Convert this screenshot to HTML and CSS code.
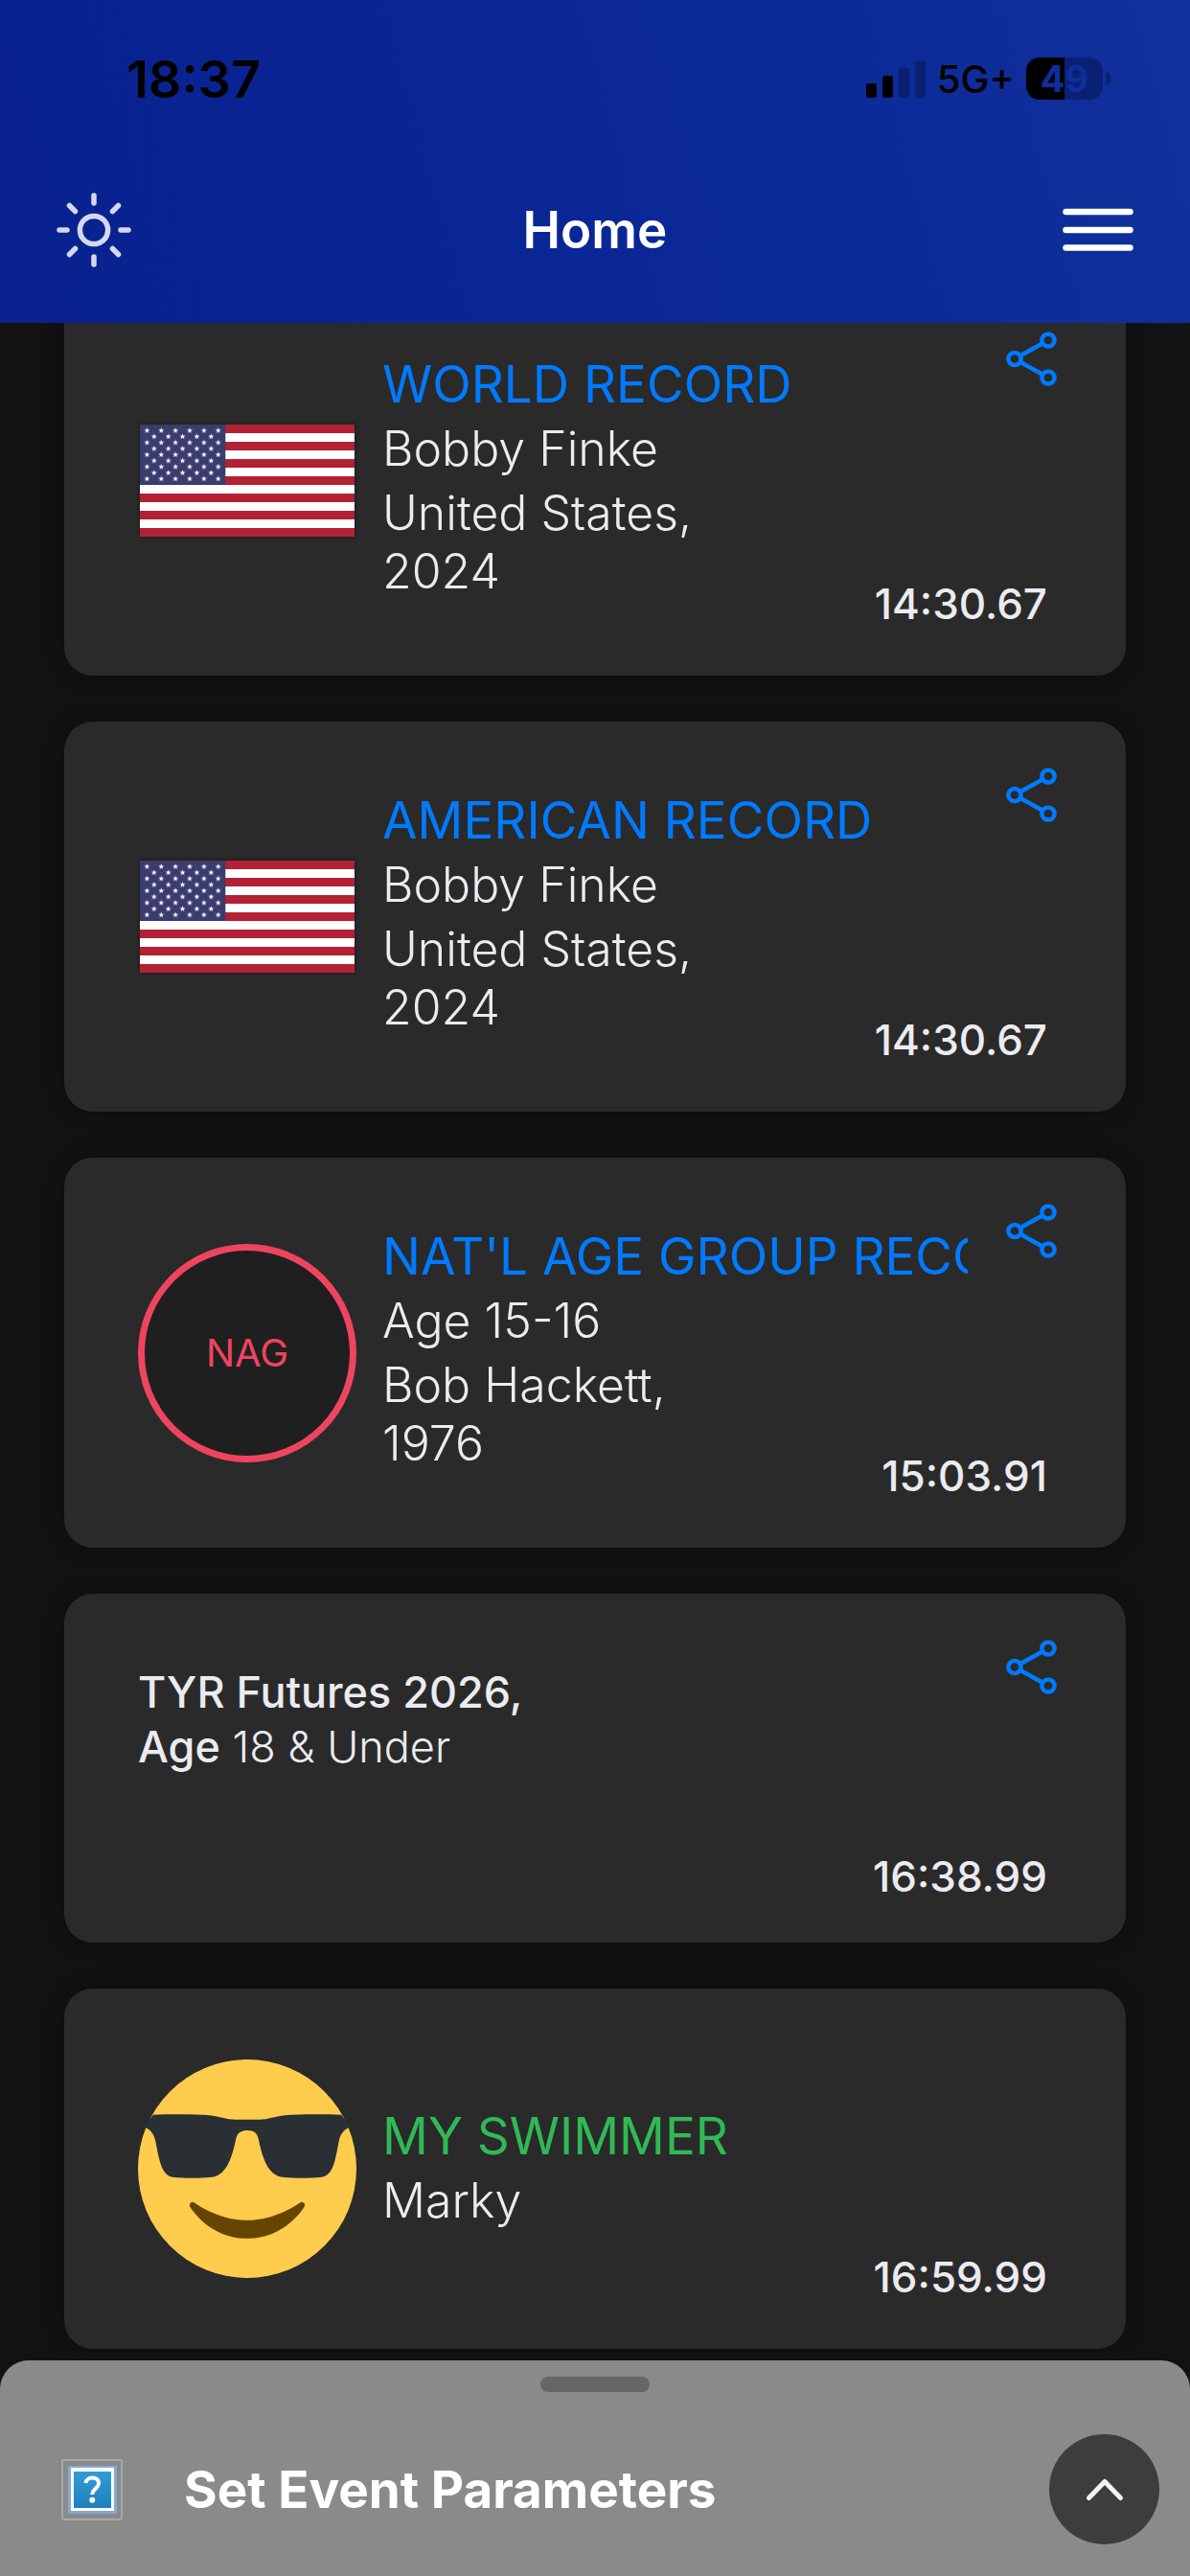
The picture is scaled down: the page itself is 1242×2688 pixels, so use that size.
FILE: index.html
```html
<!DOCTYPE html>
<html lang="en">
<head>
  <meta charset="UTF-8" />
  <meta name="viewport" content="width=device-width, initial-scale=1" />
  <title>Home</title>
  <link rel="stylesheet" href="styles.css">
</head>
<body>
  <!-- shared icons -->
  <svg class="defs" width="0" height="0" aria-hidden="true">
    <defs>
      <path id="star" d="M0-3.2 .8-1H3L1.2.4 1.9 2.7 0 1.3-1.9 2.7-1.2.4-3-1H-.8Z" fill="#fff" />
      <pattern id="stars" width="14.87" height="12.6" patternUnits="userSpaceOnUse">
        <use href="#star" x="7.4" y="6.3" />
      </pattern>
      <pattern id="stars-inner" x="7.43" y="6.3" width="14.87" height="12.6" patternUnits="userSpaceOnUse">
        <use href="#star" x="7.4" y="6.3" />
      </pattern>
    </defs>
    <symbol id="flag-us" viewBox="0 0 224 117">
      <rect width="224" height="117" fill="#fff" />
      <path d="M0 4.5H224M0 22.5H224M0 40.5H224M0 58.5H224M0 76.5H224M0 94.5H224M0 112.5H224" stroke="#b22234" stroke-width="9" />
      <rect width="89.3" height="63" fill="#3c3b6e" />
      <rect width="89.3" height="63" fill="url(#stars)" />
      <rect x="7.43" y="6.3" width="74.4" height="50.4" fill="url(#stars-inner)" />
    </symbol>
    <symbol id="share" viewBox="0 0 53 57">
      <g fill="none" stroke="#007aff" stroke-width="4.5">
        <circle cx="44" cy="9" r="6.6" />
        <circle cx="9" cy="28.5" r="6.6" />
        <circle cx="44" cy="48" r="6.6" />
        <path d="M14.8 25.3 38.2 12.2M14.8 31.7 38.2 44.8" />
      </g>
    </symbol>
  </svg>

  <header class="header">
    <div class="status">
      <span class="clock">18:37</span>
      <div class="status-icons">
        <svg width="62" height="40" viewBox="0 0 62 40" aria-hidden="true">
          <rect x="0" y="25" width="11" height="15" rx="3" />
          <rect x="17" y="17" width="11" height="23" rx="3" />
          <rect x="34" y="9" width="11" height="31" rx="3" opacity=".25" />
          <rect x="51" y="1" width="11" height="39" rx="3" opacity=".25" />
        </svg>
        <span class="network">5G+</span>
        <span class="battery">49</span>
      </div>
    </div>
    <nav class="navbar">
      <button class="icon-btn" aria-label="Toggle theme">
        <svg width="80" height="80" viewBox="0 0 80 80" fill="none" stroke="#d3d8ee" stroke-width="5.5" stroke-linecap="round">
          <circle cx="40" cy="40" r="14.6" />
          <path d="M40 4V12M40 68V76M4 40H12M68 40H76M14.5 14.5 20.5 20.5M59.5 59.5 65.5 65.5M14.5 65.5 20.5 59.5M59.5 20.5 65.5 14.5" />
        </svg>
      </button>
      <h1>Home</h1>
      <button class="icon-btn" aria-label="Menu">
        <svg width="76" height="48" viewBox="0 0 76 48" stroke="#fff" stroke-width="6.5" stroke-linecap="round">
          <path d="M4.5 5H71.5M4.5 24H71.5M4.5 42.5H71.5" />
        </svg>
      </button>
    </nav>
  </header>

  <main class="cards">
    <article class="card">
      <svg class="flag" viewBox="0 0 224 117" role="img" aria-label="United States flag"><use href="#flag-us" /></svg>
      <div class="info">
        <h2>WORLD RECORD</h2>
        <p>Bobby Finke</p>
        <p class="detail">United States,<br>2024</p>
      </div>
      <div class="side">
        <button class="icon-btn" aria-label="Share"><svg width="53" height="57"><use href="#share" /></svg></button>
        <span class="time">14:30.67</span>
      </div>
    </article>

    <article class="card">
      <svg class="flag" viewBox="0 0 224 117" role="img" aria-label="United States flag"><use href="#flag-us" /></svg>
      <div class="info">
        <h2>AMERICAN RECORD</h2>
        <p>Bobby Finke</p>
        <p class="detail">United States,<br>2024</p>
      </div>
      <div class="side">
        <button class="icon-btn" aria-label="Share"><svg width="53" height="57"><use href="#share" /></svg></button>
        <span class="time">14:30.67</span>
      </div>
    </article>

    <article class="card">
      <div class="nag">NAG</div>
      <div class="info">
        <h2>NAT'L AGE GROUP RECORD</h2>
        <p>Age 15-16</p>
        <p class="detail">Bob Hackett,<br>1976</p>
      </div>
      <div class="side">
        <button class="icon-btn" aria-label="Share"><svg width="53" height="57"><use href="#share" /></svg></button>
        <span class="time">15:03.91</span>
      </div>
    </article>

    <article class="card card-standard">
      <p class="standard"><strong>TYR Futures 2026,</strong><br><strong>Age</strong> 18 &amp; Under</p>
      <div class="side">
        <button class="icon-btn" aria-label="Share"><svg width="53" height="57"><use href="#share" /></svg></button>
        <span class="time">16:38.99</span>
      </div>
    </article>

    <article class="card">
      <svg class="avatar" viewBox="0 0 36 36" role="img" aria-label="Smiling face with sunglasses">
        <circle cx="18" cy="18" r="18" fill="#ffcc4d" />
        <path fill="#292f33" d="M2.5 9.1C5 9 9 9 11.3 9.15C13.5 9.3 14.5 9.9 16 9.9H20C21.5 9.9 22.5 9.3 24.7 9.15C27 9 31 9 33.5 9.1L35 11.1C33.9 11.6 33.4 12.2 33.1 13.5C32.6 16 32.3 19.1 30.3 19.4C28.3 19.6 25.8 19.6 23.8 19.4C21.3 19 20.5 16 19.9 13.3C19.7 12.2 19.2 11.7 18 11.7S16.3 12.2 16.1 13.3C15.5 16 14.7 19 12.2 19.4C10.2 19.6 7.7 19.6 5.7 19.4C3.8 19.1 3.4 16 2.9 13.5C2.6 12.2 2.1 11.6 1 11.1Z" />
        <path fill="#664500" d="M27.335 23.629c-.178-.161-.444-.171-.635-.029-.039.029-3.922 2.9-8.7 2.9-4.766 0-8.662-2.871-8.7-2.9-.191-.142-.457-.13-.635.029-.177.16-.217.424-.094.628C8.7 24.472 11.788 29.5 18 29.5s9.301-5.028 9.429-5.243c.123-.205.084-.468-.094-.628z" />
      </svg>
      <div class="info">
        <h2 class="green">MY SWIMMER</h2>
        <p>Marky</p>
      </div>
      <div class="side">
        <span class="time">16:59.99</span>
      </div>
    </article>
  </main>

  <section class="sheet">
    <div class="handle"></div>
    <div class="sheet-row">
      <svg width="64" height="64" viewBox="0 0 64 64" aria-hidden="true">
        <defs>
          <linearGradient id="blue" x1="0" y1="0" x2="0" y2="1">
            <stop offset="0" stop-color="#309dd6" />
            <stop offset="1" stop-color="#1f7fbd" />
          </linearGradient>
        </defs>
        <rect x="1" y="1" width="62" height="62" rx="1" fill="none" stroke="#a8a8a8" stroke-width="2" />
        <rect x="7" y="7" width="51" height="50" fill="#86a9d6" />
        <rect x="10" y="9" width="45" height="45" fill="#fff" />
        <rect x="13" y="13" width="39" height="38" fill="url(#blue)" />
        <path d="M25.5 25C26 17.5 39.5 17.5 39 25.5C38.7 31 32.5 30.5 32.3 37" fill="none" stroke="#fff" stroke-width="4" />
        <circle cx="32.3" cy="42.8" r="3" fill="#fff" />
      </svg>
      <h2>Set Event Parameters</h2>
      <button class="expand" aria-label="Expand">
        <svg width="42" height="26" viewBox="0 0 42 26" fill="none" stroke="#f2f2f7" stroke-width="5" stroke-linecap="round" stroke-linejoin="round">
          <path d="M4.5 21.5 21 4.5 37.5 21.5" />
        </svg>
      </button>
    </div>
  </section>
</body>
</html>
```
FILE: styles.css
```css
* {
  box-sizing: border-box;
}
body {
  margin: 0;
  min-height: 100vh;
  display: flex;
  flex-direction: column;
  background: #121212;
  color: #ebebf0;
  font-family: Inter, sans-serif;
}
h1, h2, p {
  margin: 0;
}
button {
  font: inherit;
  border: none;
  cursor: pointer;
}
svg {
  display: block;
}
.defs {
  position: absolute;
}
.icon-btn {
  padding: 0;
  background: none;
}

/* header */
.header {
  position: relative;
  z-index: 1;
  height: 337px;
  background: linear-gradient(75deg, #08218f, #0a2795 50%, #10309c);
}
.status {
  display: flex;
  justify-content: space-between;
  align-items: center;
  height: 164px;
  padding: 0 91px 0 132px;
  color: #000;
}
.clock {
  font-size: 54px;
  font-weight: 600;
}
.status-icons {
  display: flex;
  align-items: center;
  gap: 12px;
}
.network {
  font-size: 40px;
  font-weight: 500;
}
.battery {
  position: relative;
  width: 80px;
  height: 44px;
  border-radius: 14px;
  background: linear-gradient(90deg, #000 50%, #0a2173 50%);
  color: #0e2e9b;
  font-size: 38px;
  font-weight: 700;
  line-height: 44px;
  text-align: center;
}
.battery::after {
  content: "";
  position: absolute;
  left: 83px;
  top: 15px;
  width: 5px;
  height: 14px;
  border-radius: 0 5px 5px 0;
  background: #0a2173;
}
.navbar {
  display: grid;
  grid-template-columns: 80px 1fr 80px;
  align-items: center;
  height: 152px;
  padding: 0 58px;
}
.navbar h1 {
  color: #fff;
  font-size: 53px;
  font-weight: 600;
  text-align: center;
}
.navbar .icon-btn:last-child {
  justify-self: end;
}

/* cards */
.cards {
  flex: 1;
  display: flex;
  flex-direction: column;
  gap: 48px;
  margin-top: -39px;
  padding: 0 67px 12px;
}
.card {
  display: grid;
  grid-template-columns: 228px 1fr 53px;
  align-items: center;
  min-height: 376px;
  padding: 70px 72px 70px 77px;
  background: #2a2a2a;
  border-radius: 30px;
  box-shadow: 0 0 20px rgba(0, 0, 0, 0.3);
}
.card-standard {
  grid-template-columns: 1fr 53px;
  min-height: 364px;
  padding-top: 74px;
  padding-bottom: 64px;
}
.flag {
  width: 224px;
  height: 117px;
  justify-self: center;
  box-shadow: 0 0 4px rgba(0, 0, 0, 0.5);
}
.avatar {
  width: 228px;
  height: 228px;
}
.nag {
  display: flex;
  align-items: center;
  justify-content: center;
  width: 228px;
  height: 228px;
  border: 7px solid #ef445f;
  border-radius: 50%;
  background: #1f1f1f;
  color: #ef445f;
  font-size: 40px;
}
.info {
  min-width: 0;
  margin: 0 40px 0 27px;
  font-size: 50px;
  font-weight: 300;
  line-height: 67px;
}
.info h2 {
  overflow: hidden;
  color: #007aff;
  font-size: 53px;
  font-weight: 400;
  white-space: nowrap;
}
.info .green {
  color: #30b955;
}
.info .detail {
  margin: 3px 0 8px;
  line-height: 61px;
}
.side {
  align-self: stretch;
  display: flex;
  flex-direction: column;
  align-items: flex-end;
  margin: -22px 0;
}
.card-standard .side {
  margin-top: -26px;
}
.time {
  margin-top: auto;
  margin-right: 10px;
  font-size: 44px;
  font-weight: 500;
  line-height: 54px;
  white-space: nowrap;
}
.standard {
  align-self: start;
  font-size: 45px;
  font-weight: 300;
  line-height: 57px;
}
.standard strong {
  font-weight: 500;
}

/* bottom sheet */
.sheet {
  position: sticky;
  bottom: 0;
  height: 225px;
  padding-top: 17px;
  background: #8a8a8a;
  border-radius: 30px 30px 0 0;
}
.handle {
  width: 114px;
  height: 16px;
  margin: 0 auto 44px;
  border-radius: 8px;
  background: #666;
}
.sheet-row {
  display: flex;
  align-items: center;
  padding: 0 32px 0 64px;
}
.sheet-row h2 {
  flex: 1;
  margin-left: 64px;
  color: #fff;
  font-size: 53px;
  font-weight: 700;
}
.expand {
  display: flex;
  align-items: center;
  justify-content: center;
  width: 115px;
  height: 115px;
  padding: 0;
  border-radius: 50%;
  background: #3d3d3d;
}
```
